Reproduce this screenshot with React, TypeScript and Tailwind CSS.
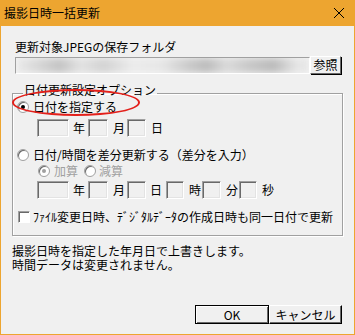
import React from "react";

const Box = ({ w, ml }: { w: string; ml: string }) => (
  <div
    className={`${w} ${ml} h-[18px] border-t border-l border-t-[#a0a0a0] border-l-[#a0a0a0] border-b border-r border-b-white border-r-white shadow-[inset_1px_1px_0_#696969,inset_-1px_-1px_0_#e3e3e3] bg-[#f0f0f0]`}
  />
);

const Radio = ({ checked, disabled }: { checked?: boolean; disabled?: boolean }) => (
  <div className="w-[12px] h-[12px] rounded-full border border-[#a0a0a0] bg-white flex items-center justify-center shadow-[inset_1px_1px_0_#696969]">
    {checked && (
      <div className={`w-[4px] h-[4px] rounded-full ${disabled ? "bg-[#a0a0a0]" : "bg-black"}`} />
    )}
  </div>
);

export default function App() {
  return (
    <div className="relative w-[355px] h-[335px] bg-[#eda530] px-[1px] pb-[1px] flex flex-col font-['Noto_Sans_CJK_JP',sans-serif] text-[12px] leading-[14px] text-black">
      {/* title bar */}
      <div className="h-[26px] flex items-center justify-between pl-[3px] pr-[9px]">
        <span className="text-[12px] leading-[14px]">撮影日時一括更新</span>
        <svg width="12" height="12" viewBox="0 0 12 12">
          <path d="M1 1 L11 11 M11 1 L1 11" stroke="#000" strokeWidth="1" />
        </svg>
      </div>
      {/* body */}
      <div className="flex-1 bg-[#f0f0f0] flex flex-col pt-[14px]">
        <div className="ml-[14px] h-[14px]">更新対象JPEGの保存フォルダ</div>
        <div className="ml-[14px] mt-[2px] flex items-start">
          <div className="w-[295px] h-[17px] mt-[1px] overflow-hidden border border-t-[#a0a0a0] border-l-[#a0a0a0] border-b-white border-r-white bg-[#f4f4f4]">
            <div className="w-full h-full blur-[3px] bg-[linear-gradient(90deg,#ebebeb_0%,#d6d6d6_8%,#c4c4c4_15%,#e2e2e2_22%,#d3d3d3_30%,#ececec_40%,#e6e6e6_50%,#cdcdcd_58%,#bdbdbd_65%,#dadada_72%,#c8c8c8_80%,#bcbcbc_88%,#e6e6e6_96%)]" />
          </div>
          <div className="w-[31px] h-[18px] border border-t-white border-l-white border-b-[#696969] border-r-[#696969] shadow-[1px_1px_0_#000] bg-[#f0f0f0] flex items-center justify-center">
            参照
          </div>
        </div>
        {/* group */}
        <fieldset className="ml-[11px] mt-[9px] w-[331px] h-[153px] border border-[#a0a0a0] shadow-[inset_1px_1px_0_#fff,1px_1px_0_#fff] pl-[4px]">
          <legend className="ml-[6px] px-[1px] pb-[6px] leading-[14px]">日付更新設定オプション</legend>
          <div className="-mt-[3px] h-[14px] flex items-center">
            <Radio checked />
            <span className="ml-[4px]">日付を指定する</span>
          </div>
          <div className="mt-[5px] flex items-center h-[18px]">
            <Box w="w-[32px]" ml="ml-[20px]" />
            <span className="ml-[4px]">年</span>
            <Box w="w-[20px]" ml="ml-[3px]" />
            <span className="ml-[5px]">月</span>
            <Box w="w-[19px]" ml="ml-[2px]" />
            <span className="ml-[5px]">日</span>
          </div>
          <div className="mt-[11px] h-[14px] flex items-center">
            <Radio />
            <span className="ml-[4px]">日付/時間を差分更新する（差分を入力）</span>
          </div>
          <div className="mt-[2px] h-[14px] flex items-center text-[#a0a0a0]">
            <div className="ml-[21px]">
              <Radio checked disabled />
            </div>
            <span className="ml-[4px]">加算</span>
            <div className="ml-[6px]">
              <Radio disabled />
            </div>
            <span className="ml-[3px]">減算</span>
          </div>
          <div className="mt-[3px] flex items-center h-[18px]">
            <Box w="w-[32px]" ml="ml-[20px]" />
            <span className="ml-[4px]">年</span>
            <Box w="w-[20px]" ml="ml-[3px]" />
            <span className="ml-[5px]">月</span>
            <Box w="w-[19px]" ml="ml-[2px]" />
            <span className="ml-[4px]">日</span>
            <Box w="w-[18px]" ml="ml-[4px]" />
            <span className="ml-[5px]">時</span>
            <Box w="w-[19px]" ml="ml-[1px]" />
            <span className="ml-[5px]">分</span>
            <Box w="w-[18px]" ml="ml-[1px]" />
            <span className="ml-[5px]">秒</span>
          </div>
          <div className="mt-[11px] h-[14px] flex items-center">
            <div className="ml-[1px] w-[12px] h-[12px] bg-white border border-t-[#a0a0a0] border-l-[#a0a0a0] border-b-white border-r-white shadow-[inset_1px_1px_0_#696969]" />
            <span className="ml-[3px] whitespace-nowrap">ﾌｧｲﾙ変更日時、ﾃﾞｼﾞﾀﾙﾃﾞｰﾀの作成日時も同一日付で更新</span>
          </div>
        </fieldset>
        <div className="ml-[11px] mt-[8px]">
          <div className="h-[14px]">撮影日時を指定した年月日で上書きします。</div>
          <div className="h-[14px]">時間データは変更されません。</div>
        </div>
        <div className="mt-[33px] flex justify-end pr-[12px]">
          <div className="w-[74px] h-[19px] border border-[#000] bg-[#f0f0f0] shadow-[inset_1px_1px_0_#fff,inset_-1px_-1px_0_#696969] flex items-center justify-center">
            OK
          </div>
          <div className="w-[73px] h-[19px] border border-t-white border-l-white border-b-[#000] border-r-[#000] bg-[#f0f0f0] shadow-[inset_-1px_-1px_0_#696969] flex items-center justify-center">
            キャンセル
          </div>
        </div>
      </div>
      {/* annotation ellipse */}
      <div className="absolute left-[12px] top-[89px] w-[128px] h-[27px] rounded-[50%] border-2 border-[#e3201b]" />
    </div>
  );
}
